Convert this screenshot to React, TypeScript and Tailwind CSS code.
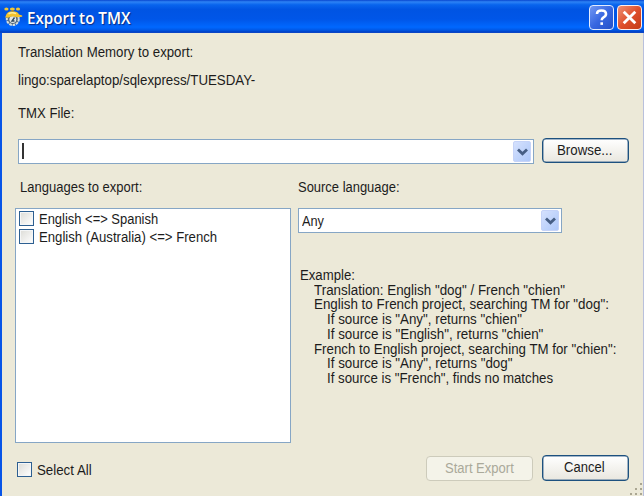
import type { ReactNode } from "react";

function Label({ className = "", children }: { className?: string; children: ReactNode }) {
  return <div className={`w-max origin-left whitespace-pre ${className}`}>{children}</div>;
}

function DropButton() {
  return (
    <span className="flex h-[21px] w-[18px] items-center justify-center rounded-[2px] border border-[#c5d3f8] bg-linear-to-br from-[#d5e1fd] to-[#aec8f9]">
      <svg width="11" height="8" viewBox="0 0 11 8" fill="none">
        <path d="M1 1.4 L5.5 5.7 L10 1.4" stroke="#465e84" strokeWidth="2.8" />
      </svg>
    </span>
  );
}

function Check() {
  return (
    <span className="size-[15px] shrink-0 border border-[#2d5f91] bg-linear-to-br from-[#dcdcd7] to-white shadow-[inset_0_0_0_1px_#f4f6f7]" />
  );
}

function AppIcon() {
  return (
    <svg className="mt-[1px]" width="19" height="20" viewBox="0 0 19 20">
      <circle cx="8.8" cy="12" r="6" fill="#53687c" stroke="#d9dfdc" strokeWidth="2" strokeDasharray="2.6 .8" />
      <circle cx="8.8" cy="12.5" r="3.4" fill="#e3e8e8" />
      <path d="M10.5 10.5 L8 14 H10.5" fill="none" stroke="#30475e" strokeWidth="1.4" />
      <path d="M1.8 9 Q2.6 4.2 8.5 4.2 Q13.6 4.2 15 7.5 L18.2 8.4 V9.8 L13 10.2 Q8.5 8.6 4 10.8 L1 10.4Z" fill="#f5c22a" />
      <path d="M4.5 6.8 Q8 4.6 12 6.6" stroke="#ffef9c" strokeWidth="1.5" fill="none" />
      <ellipse cx="2.4" cy="1.9" rx="2.1" ry="1.5" fill="#f1c637" />
      <ellipse cx="8.4" cy="1.9" rx="2.5" ry="1.5" fill="#f1c637" />
      <ellipse cx="14" cy="1.9" rx="2.1" ry="1.5" fill="#f1c637" />
      <path d="M7.6 3 H9.5 V4.6 H7.6Z" fill="#b98a24" />
    </svg>
  );
}

const example = [
  { text: "Example:", style: "scale-x-[.94]" },
  { text: 'Translation: English "dog" / French "chien"', style: "ml-[14px] scale-x-[.957]" },
  { text: 'English to French project, searching TM for "dog":', style: "ml-[14px] scale-x-[.956]" },
  { text: 'If source is "Any", returns "chien"', style: "ml-[27px] scale-x-[.954]" },
  { text: 'If source is "English", returns "chien"', style: "ml-[27px] scale-x-[.957]" },
  { text: 'French to English project, searching TM for "chien":', style: "ml-[14px] scale-x-[.949]" },
  { text: 'If source is "Any", returns "dog"', style: "ml-[27px] scale-x-[.955]" },
  { text: 'If source is "French", finds no matches', style: "ml-[27px] scale-x-[.947]" },
];

export default function App() {
  return (
    <div className="flex h-[496px] w-[644px] flex-col overflow-hidden bg-[#ece9d8] font-['Liberation_Sans',Arial,sans-serif] text-[14px] leading-[18px] text-[#1c1c1c]">
      <header className="flex h-[33px] shrink-0 items-center border-b border-[#0b45c5] bg-[linear-gradient(#0846cf_0%,#2d83f5_6%,#0864ed_15%,#0054e3_30%,#0056e8_60%,#0068ff_85%,#0057e5_94%,#0040c4_100%)] pr-[2px] pl-[4px]">
        <AppIcon />
        <div className="mt-[3px] ml-[4px] w-[500px]">
          <Label className="scale-x-[.95] font-['Open_Sans',sans-serif] text-[16px] font-semibold text-white [text-shadow:1px_1px_1px_#0a2a80]">Export to TMX</Label>
        </div>
        <div className="mt-[2px] ml-auto flex gap-[3px]">
          <button className="flex size-[25px] items-center justify-center rounded-[4px] border border-[#e4ecff] bg-linear-to-br from-[#7297f2] via-[#3867e1] to-[#2451c8]">
            <svg width="17" height="19" viewBox="0 0 17 19" fill="none">
              <path d="M4 6 Q4 2.5 8.5 2.5 Q13 2.5 13 6 Q13 8 10.5 9.3 Q8.7 10.3 8.7 12.3" stroke="white" strokeWidth="2.6" />
              <path d="M7.4 14.3 H10 V16.9 H7.4Z" fill="white" />
            </svg>
          </button>
          <button className="flex size-[25px] items-center justify-center rounded-[4px] border border-[#fff0ec] bg-linear-to-br from-[#ed8e72] via-[#df502c] to-[#c43a14]">
            <svg width="17" height="17" viewBox="0 0 17 17" fill="none">
              <path d="M2.7 2.7 L14.3 14.3 M14.3 2.7 L2.7 14.3" stroke="white" strokeWidth="2.8" />
            </svg>
          </button>
        </div>
      </header>

      <main className="relative flex grow flex-col border-r border-l-2 border-r-[#b9c0dc] border-l-[#0855e8] pt-[10px]">
        <Label className="ml-[16px] scale-x-[.945]">Translation Memory to export:</Label>
        <Label className="mt-[10px] ml-[16px] scale-x-[.95]">lingo:sparelaptop/sqlexpress/TUESDAY-</Label>
        <Label className="mt-[15px] ml-[16px] scale-x-[.94]">TMX File:</Label>

        <div className="mt-[16px] ml-[16px] flex h-[27px] items-start">
          <div className="mt-[1px] flex h-[25px] w-[516px] items-center justify-between border border-[#86a6c5] bg-white pr-[2px] pl-[3px]">
            <span className="mb-[2px] h-[16px] w-[1.5px] bg-[#333]" />
            <DropButton />
          </div>
          <button className="ml-[8px] flex h-[25px] w-[87px] justify-center rounded-[4px] border border-[#1d517f] bg-linear-to-b from-white to-[#e9e7df] pt-[2px] shadow-[inset_0_0_0_.5px_#496f93]">
            <Label className="ml-[2px] origin-center scale-x-[.95]">Browse...</Label>
          </button>
        </div>

        <div className="mt-[13px] ml-[13px] flex">
          <section className="w-[283px]">
            <Label className="ml-[5px] scale-x-[.93]">Languages to export:</Label>
            <div className="mt-[12px] flex h-[235px] w-[276px] flex-col gap-[3px] border border-[#86a6c5] bg-white pt-[2px] pl-[3px]">
              <div className="flex h-[15px] items-center gap-[5px]">
                <Check />
                <Label className="scale-x-[.925]">{"English <=> Spanish"}</Label>
              </div>
              <div className="flex h-[15px] items-center gap-[5px]">
                <Check />
                <Label className="scale-x-[.94]">{"English (Australia) <=> French"}</Label>
              </div>
            </div>
          </section>
          <section className="w-[340px]">
            <Label className="scale-x-[.925]">Source language:</Label>
            <div className="mt-[12px] flex h-[25px] w-[264px] items-center justify-between border border-[#86a6c5] bg-white pr-[2px] pl-[3px]">
              <Label className="scale-x-[.91]">Any</Label>
              <DropButton />
            </div>
            <div className="mt-[35px] ml-[2px] leading-[14.7px]">
              {example.map((line) => (
                <Label key={line.text} className={line.style}>{line.text}</Label>
              ))}
            </div>
          </section>
        </div>

        <footer className="mt-[12px] ml-[15px] flex h-[26px] items-start">
          <div className="mt-[7px] flex h-[15px] w-[409px] items-center gap-[5px]">
            <Check />
            <Label className="scale-x-[.95]">Select All</Label>
          </div>
          <button className="mt-[1px] flex h-[25px] w-[107px] justify-center rounded-[4px] border border-[#cdcbbb] bg-[#f4f3e9] pt-[2px] text-[#aaa99a]">
            <Label className="ml-[4px] origin-center scale-x-[.93]">Start Export</Label>
          </button>
          <button className="ml-[9px] flex h-[26px] w-[87px] justify-center rounded-[4px] border border-[#1d517f] bg-linear-to-b from-white to-[#e9e7df] pt-[2px] shadow-[inset_0_0_0_.5px_#496f93]">
            <Label className="ml-[1px] origin-center scale-x-[.93]">Cancel</Label>
          </button>
        </footer>
        <svg className="absolute right-0 bottom-0" width="14" height="13" viewBox="0 0 14 13" fill="#aaa692">
          <path d="M11 0h2v2h-2zM6 5h2v2H6zM11 5h2v2h-2zM1 10h2v2H1zM6 10h2v2H6zM11 10h2v2h-2z" />
        </svg>
      </main>
    </div>
  );
}
